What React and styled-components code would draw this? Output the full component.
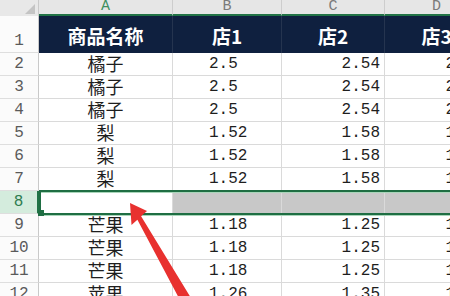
import React from 'react';
import styled, { createGlobalStyle, css } from 'styled-components';

const Global = createGlobalStyle`
  html, body { margin: 0; padding: 0; background: #fff; overflow: hidden; }
  #root { width: 450px; height: 296px; }
`;

const COLS = '39px 134px 109px 103px 104px';
const MONO = `"Liberation Mono", "Courier New", monospace`;
const CJK = `"Noto Sans CJK SC", "Noto Sans", sans-serif`;

const Sheet = styled.div`
  position: relative;
  width: 450px;
  height: 296px;
  overflow: hidden;
  background: #fff;
`;

const Row = styled.div`
  display: grid;
  grid-template-columns: ${COLS};
  height: ${(p) => p.$h}px;
  position: relative;
  ${(p) =>
    p.$selected &&
    css`
      &::after {
        content: '';
        position: absolute;
        left: 39px;
        right: -4px;
        top: -1px;
        bottom: -1px;
        border: 2px solid #1f6e43;
        box-shadow: 0 1px 0 #a9d6ba, inset 0 1px 0 #a9d6ba;
        pointer-events: none;
        z-index: 2;
      }
      &::before {
        content: '';
        position: absolute;
        left: 38px;
        bottom: -2px;
        width: 6px;
        height: 6px;
        background: #1f6e43;
        z-index: 3;
      }
    `}
`;

const Corner = styled.div`
  background: #e8e8e8;
  border-right: 1px solid #c9c9c9;
  position: relative;
  &::after {
    content: '';
    position: absolute;
    right: 3px;
    bottom: 2px;
    width: 0;
    height: 0;
    border-left: 10px solid transparent;
    border-bottom: 10px solid #c4c4c4;
  }
`;

const ColLetter = styled.div`
  background: #e6e6e6;
  border-right: 1px solid #cdcdcd;
  border-bottom: 2px solid #217346;
  font-family: ${MONO};
  font-size: 15px;
  line-height: 14px;
  color: ${(p) => (p.$active ? '#3f8f5f' : '#7a7a7a')};
  text-align: center;
  white-space: nowrap;
`;

const RowHead = styled.div`
  background: ${(p) => (p.$active ? '#d4ecdd' : '#fbfbfb')};
  border-right: ${(p) => (p.$active ? '2px solid #217346' : '1px solid #c9c9c9')};
  border-bottom: 1px solid #dedede;
  font-family: ${MONO};
  font-size: 16px;
  color: ${(p) => (p.$active ? '#2f7d50' : '#5a5a5a')};
  display: flex;
  align-items: flex-end;
  justify-content: center;
  line-height: 18px;
  padding-bottom: 2px;
  box-sizing: border-box;
  overflow: hidden;
`;

const HeadCell = styled.div`
  background: #0f203f;
  border-right: 1px solid #25344f;
  color: #fff;
  font-family: ${CJK};
  font-weight: 700;
  font-size: 19px;
  display: flex;
  align-items: center;
  justify-content: center;
  padding-top: 1px;
  box-sizing: border-box;
  overflow: hidden;
  white-space: nowrap;
`;

const Cell = styled.div`
  border-right: 1px solid #dadada;
  border-bottom: 1px solid #dadada;
  background: ${(p) => (p.$gray ? '#c8c8c8' : '#fff')};
  display: flex;
  align-items: flex-end;
  justify-content: ${(p) => (p.$align === 'right' ? 'flex-end' : p.$align === 'left' ? 'flex-start' : 'center')};
  padding-left: ${(p) => p.$pl || 0}px;
  padding-right: ${(p) => p.$pr || 0}px;
  padding-bottom: 2px;
  box-sizing: border-box;
  overflow: hidden;
  white-space: nowrap;
  color: #1e1e1e;
`;

const NameText = styled.span`
  font-family: ${CJK};
  font-size: 18px;
  line-height: 19px;
`;

const NumText = styled.span`
  font-family: ${MONO};
  font-size: 16px;
  line-height: 18px;
`;

const ArrowLayer = styled.svg`
  position: absolute;
  left: 0;
  top: 0;
  width: 450px;
  height: 296px;
  pointer-events: none;
  z-index: 5;
`;

const data = [
  { n: 2, name: '橘子', b: '2.5', c: '2.54', d: '2.55' },
  { n: 3, name: '橘子', b: '2.5', c: '2.54', d: '2.55' },
  { n: 4, name: '橘子', b: '2.5', c: '2.54', d: '2.55' },
  { n: 5, name: '梨', b: '1.52', c: '1.58', d: '1.55' },
  { n: 6, name: '梨', b: '1.52', c: '1.58', d: '1.55' },
  { n: 7, name: '梨', b: '1.52', c: '1.58', d: '1.55' },
  { n: 8, empty: true },
  { n: 9, name: '芒果', b: '1.18', c: '1.25', d: '1.22' },
  { n: 10, name: '芒果', b: '1.18', c: '1.25', d: '1.22' },
  { n: 11, name: '芒果', b: '1.18', c: '1.25', d: '1.22' },
  { n: 12, name: '苹果', b: '1.26', c: '1.35', d: '1.33' },
];

export default function App() {
  return (
    <Sheet>
      <Global />
      <Row $h={16}>
        <Corner />
        <ColLetter $active>A</ColLetter>
        <ColLetter>B</ColLetter>
        <ColLetter>C</ColLetter>
        <ColLetter>D</ColLetter>
      </Row>
      <Row $h={37}>
        <RowHead>1</RowHead>
        <HeadCell>商品名称</HeadCell>
        <HeadCell>店1</HeadCell>
        <HeadCell>店2</HeadCell>
        <HeadCell>店3</HeadCell>
      </Row>
      {data.map((r) =>
        r.empty ? (
          <Row key={r.n} $h={23} $selected>
            <RowHead $active>{r.n}</RowHead>
            <Cell />
            <Cell $gray />
            <Cell $gray />
            <Cell $gray />
          </Row>
        ) : (
          <Row key={r.n} $h={23}>
            <RowHead>{r.n}</RowHead>
            <Cell>
              <NameText>{r.name}</NameText>
            </Cell>
            <Cell $align="left" $pl={36}>
              <NumText>{r.b}</NumText>
            </Cell>
            <Cell $align="right" $pr={4}>
              <NumText>{r.c}</NumText>
            </Cell>
            <Cell $align="right" $pr={4}>
              <NumText>{r.d}</NumText>
            </Cell>
          </Row>
        )
      )}
      <ArrowLayer viewBox="0 0 450 296">
        <polygon
          points="130,203 147,211 141.1,216.3 191,298 181,302 137.4,219.7 131.5,225"
          fill="#e8312f"
        />
      </ArrowLayer>
    </Sheet>
  );
}
